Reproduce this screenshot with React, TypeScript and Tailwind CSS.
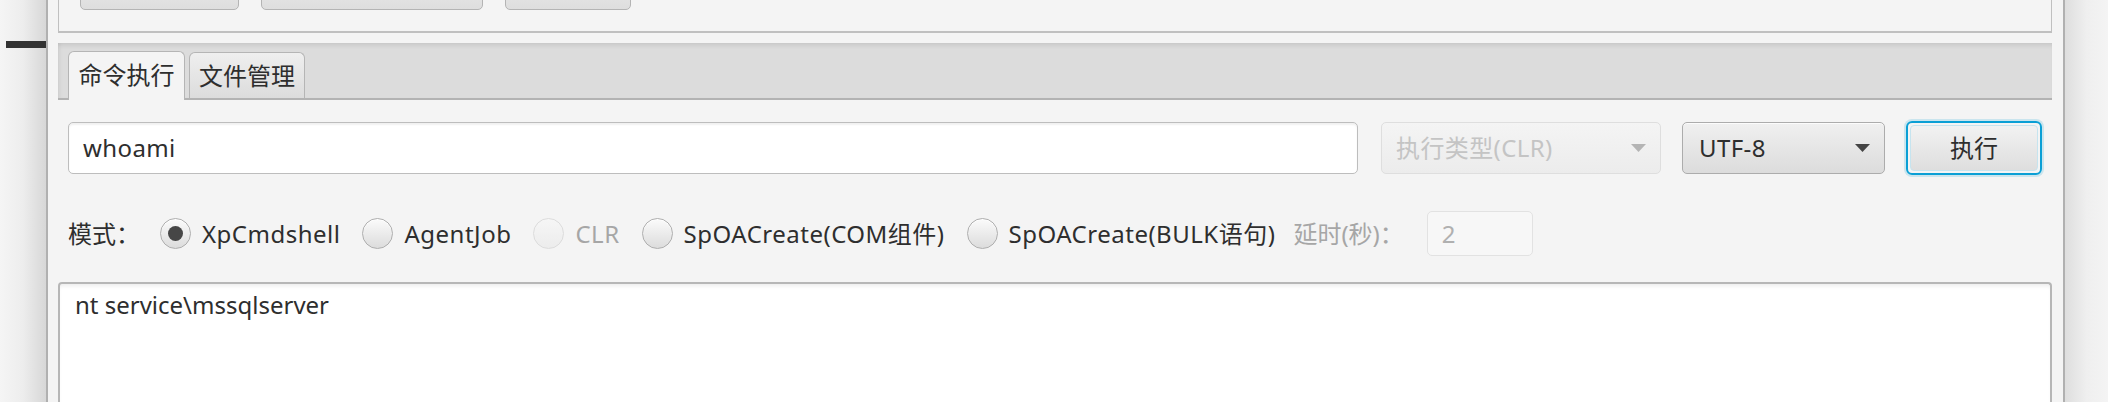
import React from "react";

const FONT = { fontFamily: '"Noto Sans", "Noto Sans CJK SC", sans-serif' };

function Radio({ label, checked = false, disabled = false }: { label: string; checked?: boolean; disabled?: boolean }) {
  return (
    <div className="flex items-center gap-[11px]">
      <div
        className={
          disabled
            ? "w-[31px] h-[31px] rounded-full border-[1.5px] border-[#dcdcdc] bg-linear-to-b from-[#f6f6f6] to-[#ececec] flex items-center justify-center"
            : "w-[31px] h-[31px] rounded-full border-[1.5px] border-[#aeaeae] bg-linear-to-b from-[#fbfbfb] to-[#dcdcdc] shadow-[inset_0_1px_0_rgba(255,255,255,0.9)] flex items-center justify-center"
        }
      >
        {checked && <div className="w-[15px] h-[15px] rounded-full bg-[#464646]" />}
      </div>
      <span className={disabled ? "text-[#a6a6a6] tracking-[0.5px]" : "text-[#2e2e2e] tracking-[0.5px]"}>{label}</span>
    </div>
  );
}

function Arrow({ disabled = false }: { disabled?: boolean }) {
  return (
    <svg width="15" height="8" viewBox="0 0 15 8">
      <path d="M0 0 L15 0 L7.5 8 Z" fill={disabled ? "#b4b4b4" : "#444444"} />
    </svg>
  );
}

export default function App() {
  return (
    <div style={FONT} className="w-[2108px] h-[402px] overflow-hidden flex bg-[#f4f4f4] text-[24px] text-[#2e2e2e]">
      {/* left shadow strip */}
      <div className="w-[46px] h-full bg-linear-to-r from-[#f5f5f5] via-[#ededed] to-[#d7d7d7]">
        <div className="mt-[41px] ml-[6px] w-[40px] h-[7px] bg-[#333333]" />
      </div>

      {/* main window */}
      <div className="w-[2019px] h-full border-l-2 border-r-2 border-[#b0b0b0] pl-[10px] pr-[11px] flex flex-col">
        {/* top panel (cut off) */}
        <div className="h-[33px] border-x-[1.5px] border-b-2 border-[#c0c0c0] flex items-start gap-[22px] pl-[21px] overflow-hidden shrink-0">
          <div className="-mt-[30px] w-[159px] h-[40px] rounded-[5px] border-[1.5px] border-[#b4b4b4] bg-linear-to-b from-[#ececec] to-[#dedede]" />
          <div className="-mt-[30px] w-[222px] h-[40px] rounded-[5px] border-[1.5px] border-[#b4b4b4] bg-linear-to-b from-[#ececec] to-[#dedede]" />
          <div className="-mt-[30px] w-[126px] h-[40px] rounded-[5px] border-[1.5px] border-[#b4b4b4] bg-linear-to-b from-[#ececec] to-[#dedede]" />
        </div>

        {/* tab pane */}
        <div className="mt-[10px] flex-1 flex flex-col min-h-0">
          {/* tab header */}
          <div className="h-[57px] shrink-0 bg-[#dcdcdc] border-b-2 border-[#b3b3b3] shadow-[inset_0_5px_5px_-3px_rgba(0,0,0,0.10),inset_4px_0_4px_-3px_rgba(0,0,0,0.08)] flex items-end pl-[10px] gap-[4px]">
            <div className="relative -mb-[2px] w-[117px] h-[49px] rounded-t-[6px] border-x-[1.5px] border-t-[1.5px] border-[#b5b5b5] bg-[#f4f4f4] flex items-center justify-center pb-[2px]">
              命令执行
            </div>
            <div className="w-[116px] h-[46px] rounded-t-[6px] border-x-[1.5px] border-t-[1.5px] border-[#b5b5b5] bg-linear-to-b from-[#efefef] to-[#dcdcdc] flex items-center justify-center">
              文件管理
            </div>
          </div>

          {/* tab content */}
          <div className="flex-1 flex flex-col min-h-0">
            <div className="px-[10px] pt-[22px]">
              {/* command row */}
              <div className="flex items-center h-[52px]">
                <div className="flex-1 h-full rounded-[5px] border-[1.5px] border-[#bdbdbd] bg-white shadow-[inset_0_2px_2px_rgba(0,0,0,0.06)] flex items-center pl-[14px] tracking-[0.4px]">
                  whoami
                </div>
                <div className="ml-[23px] w-[280px] h-full rounded-[5px] border-[1.5px] border-[#dedede] bg-linear-to-b from-[#f4f4f4] to-[#ececec] flex items-center justify-between pl-[14px] pr-[14px] text-[#c4c4c4]">
                  <span className="tracking-[0.4px]">执行类型(CLR)</span>
                  <Arrow disabled />
                </div>
                <div className="ml-[21px] w-[203px] h-full rounded-[5px] border-[1.5px] border-[#acacac] bg-linear-to-b from-[#f0f0f0] to-[#dcdcdc] shadow-[inset_0_1px_0_rgba(255,255,255,0.8)] flex items-center justify-between pl-[16px] pr-[14px]">
                  <span className="tracking-[0.4px]">UTF-8</span>
                  <Arrow />
                </div>
                <div className="ml-[21px] w-[136px] h-[54px] rounded-[6px] border-2 border-[#0a9fd5] shadow-[0_0_0_2px_rgba(10,159,213,0.18)] p-[2px]">
                  <div className="w-full h-full rounded-[4px] border border-[#c6e4ef] bg-linear-to-b from-[#f2f2f2] to-[#dedede] flex items-center justify-center">
                    执行
                  </div>
                </div>
              </div>

              {/* mode row */}
              <div className="mt-[37px] h-[45px] flex items-center">
                <span>模式：</span>
                <div className="ml-[20px] flex items-center gap-[22px]">
                  <Radio label="XpCmdshell" checked />
                  <Radio label="AgentJob" />
                  <Radio label="CLR" disabled />
                  <Radio label="SpOACreate(COM组件)" />
                  <Radio label="SpOACreate(BULK语句)" />
                </div>
                <span className="ml-[18px] text-[#a6a6a6]">延时(秒)：</span>
                <div className="ml-[23px] w-[106px] h-[45px] rounded-[5px] border-[1.5px] border-[#e2e2e2] bg-[#f7f7f7] flex items-center pl-[14px] text-[#b0b0b0]">
                  2
                </div>
              </div>
            </div>

            {/* output area */}
            <div className="mt-[26px] flex-1 rounded-t-[4px] border-x-2 border-t-2 border-[#b6b6b6] bg-white shadow-[inset_0_4px_4px_-2px_rgba(0,0,0,0.08)] pl-[15px] pt-[5px] leading-[32px]">
              nt service\mssqlserver
            </div>
          </div>
        </div>
      </div>

      {/* right shadow strip */}
      <div className="flex-1 h-full bg-linear-to-r from-[#dedede] via-[#efefef] to-[#f4f4f4]" />
    </div>
  );
}
